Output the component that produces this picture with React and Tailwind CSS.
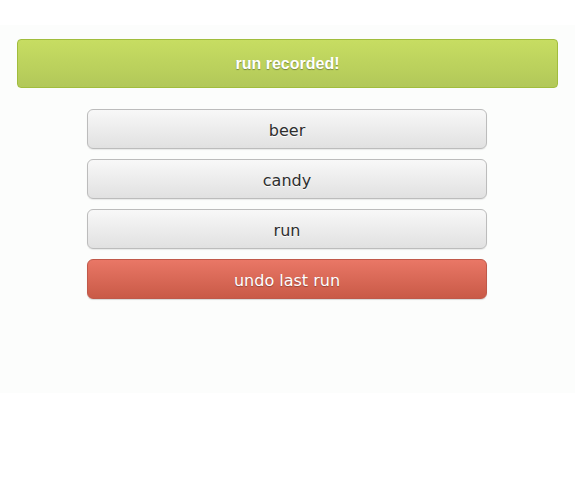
export default function App() {
  const grayBtn =
    "h-[40px] w-full rounded-[6px] border border-[#bcbcbc] bg-gradient-to-b from-[#f8f8f8] to-[#e1e1e1] text-[16px] text-[#2e2e2e] [text-shadow:0_1px_0_#ffffff] shadow-[0_1px_1px_rgba(0,0,0,0.08)] flex items-center justify-center pt-[3px]";
  return (
    <div className="w-[575px] h-[500px] bg-white">
      <div className="h-[25px] bg-white" />
      <div className="h-[368px] bg-[#fcfdfc] pt-[14px] px-[17px] flex flex-col">
        <div className="h-[49px] w-full rounded-[4px] border border-[#a1bd3d] bg-gradient-to-b from-[#c7dd62] to-[#b2c859] flex items-center justify-center">
          <span className="font-['Liberation_Sans',Arial,sans-serif] font-bold text-[16px] text-white [text-shadow:0_1px_1px_rgba(0,0,0,0.35)]">
            run recorded!
          </span>
        </div>
        <div className="mt-[21px] w-[400px] ml-[70px] flex flex-col gap-[10px] font-['DejaVu_Sans',sans-serif]">
          <div className={grayBtn}>beer</div>
          <div className={grayBtn}>candy</div>
          <div className={grayBtn}>run</div>
          <div className="h-[40px] w-full rounded-[6px] border border-[#c0594a] bg-gradient-to-b from-[#e97766] to-[#c95a47] text-[16px] text-white [text-shadow:0_1px_1px_rgba(0,0,0,0.3)] shadow-[0_1px_1px_rgba(0,0,0,0.15)] flex items-center justify-center pt-[3px]">
            undo last run
          </div>
        </div>
      </div>
    </div>
  );
}
